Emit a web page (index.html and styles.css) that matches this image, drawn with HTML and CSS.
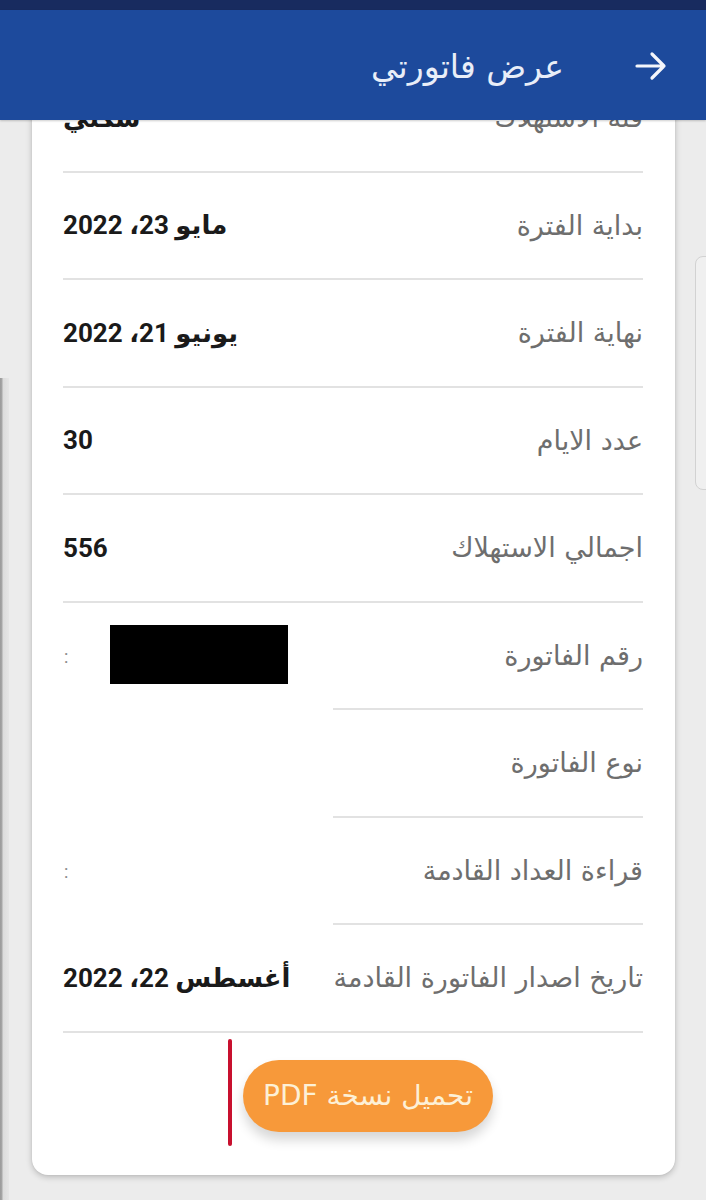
FILE: index.html
```html
<!DOCTYPE html>
<html lang="ar">
<head>
<meta charset="utf-8">
<title>عرض فاتورتي</title>
<link rel="stylesheet" href="styles.css">
</head>
<body>
<div class="screen">
  <div class="edge-left"></div>
  <div class="edge-right"></div>
  <main class="content">
    <section class="card" dir="rtl">
      <div class="row">
        <span class="label">فئة الاستهلاك</span>
        <span class="value">سكني</span>
      </div>
      <div class="row">
        <span class="label">بداية الفترة</span>
        <span class="value">مايو 23، 2022</span>
      </div>
      <div class="row">
        <span class="label">نهاية الفترة</span>
        <span class="value">يونيو 21، 2022</span>
      </div>
      <div class="row">
        <span class="label">عدد الايام</span>
        <span class="value">30</span>
      </div>
      <div class="row">
        <span class="label">اجمالي الاستهلاك</span>
        <span class="value">556</span>
      </div>
      <div class="row split">
        <span class="label">رقم الفاتورة</span>
        <span class="value masked"><span class="colon">:</span><span class="redact"></span></span>
      </div>
      <div class="row split">
        <span class="label">نوع الفاتورة</span>
        <span class="value masked"></span>
      </div>
      <div class="row split">
        <span class="label">قراءة العداد القادمة</span>
        <span class="value masked"><span class="colon">:</span></span>
      </div>
      <div class="row">
        <span class="label">تاريخ اصدار الفاتورة القادمة</span>
        <span class="value">أغسطس 22، 2022</span>
      </div>
      <div class="actions" dir="ltr">
        <span class="cursor"></span>
        <button class="pdf-btn" dir="rtl">تحميل نسخة PDF</button>
      </div>
    </section>
  </main>
  <header class="appbar">
    <div class="status"></div>
    <div class="bar" dir="rtl">
      <svg class="back" width="34" height="30" viewBox="0 0 34 30" aria-hidden="true">
        <path d="M3 15 H30 M18 3 L30 15 L18 27" fill="none" stroke="#f4f6fb" stroke-width="3.2" stroke-linecap="round" stroke-linejoin="round"/>
      </svg>
      <h1 class="title">عرض فاتورتي</h1>
    </div>
  </header>
</div>
</body>
</html>
```

FILE: styles.css
```css
* { box-sizing: border-box; }

html, body {
  margin: 0;
  padding: 0;
}

body {
  width: 706px;
  height: 1200px;
  overflow: hidden;
  background: #ececec;
  font-family: "DejaVu Sans", sans-serif;
}

.screen {
  position: relative;
  width: 706px;
  height: 1200px;
  overflow: hidden;
  background: #ececec;
}

.edge-left {
  position: absolute;
  left: 0;
  top: 378px;
  width: 9px;
  height: 822px;
  background: linear-gradient(to right, #9a9a9a 0, #a8a8a8 2px, #dcdcdc 3px, #e6e6e6 9px);
}

.edge-right {
  position: absolute;
  left: 695px;
  top: 256px;
  width: 20px;
  height: 234px;
  border: 1px solid #d2d2d2;
  border-radius: 8px;
  background: #f0f0f0;
}

.content {
  padding: 0 31px 0 32px;
}

.card {
  background: #ffffff;
  border-radius: 0 0 16px 16px;
  padding: 65px 32px 0 31px;
  height: 1175px;
  box-shadow: 0 2px 6px rgba(0, 0, 0, 0.22), 0 0 2px rgba(0, 0, 0, 0.08);
}

.row {
  display: flex;
  align-items: center;
  justify-content: space-between;
  height: 107.5px;
  border-bottom: 2px solid #e2e2e2;
}

.label {
  font-family: "DejaVu Sans", sans-serif;
  font-size: 27px;
  color: #6e6e6e;
  white-space: nowrap;
}

.value {
  font-family: Roboto, "DejaVu Sans", sans-serif;
  font-weight: bold;
  font-size: 26px;
  color: #1a1a1a;
  white-space: nowrap;
}

.row.split {
  border-bottom: none;
  align-items: stretch;
}

.row.split .label {
  width: 310px;
  display: flex;
  align-items: center;
  border-bottom: 2px solid #e2e2e2;
}

.value.masked {
  flex: 1;
  display: flex;
  direction: ltr;
  align-items: center;
}

.colon {
  font-family: Roboto, sans-serif;
  font-weight: normal;
  font-size: 18px;
  color: #8a8a8a;
  width: 4px;
  margin-left: 1px;
  margin-right: 42px;
}

.redact {
  display: block;
  width: 178px;
  height: 59px;
  background: #000000;
  margin-top: -3px;
}

.actions {
  display: flex;
  align-items: flex-start;
  height: 139px;
  padding-left: 165px;
}

.cursor {
  display: block;
  width: 4px;
  height: 107px;
  margin-top: 6px;
  background: #c8102e;
  border-radius: 2px;
}

.pdf-btn {
  margin-top: 27px;
  margin-left: 11px;
  width: 250px;
  height: 72px;
  border: none;
  border-radius: 36px;
  background: #f7993a;
  color: #fdf0d6;
  font-family: "DejaVu Sans", sans-serif;
  font-size: 28px;
  box-shadow: 0 8px 12px rgba(0, 0, 0, 0.16);
  padding: 0;
}

.appbar {
  position: absolute;
  left: 0;
  top: 0;
  width: 706px;
}

.status {
  height: 10px;
  background: #182b5f;
}

.bar {
  height: 110px;
  background: #1d4a9c;
  display: flex;
  align-items: center;
  padding-right: 38px;
  box-shadow: 0 1px 2px rgba(0, 0, 0, 0.2);
}

.back {
  display: block;
  margin-top: 2px;
}

.title {
  margin: 2px 70px 0 0;
  font-family: "DejaVu Sans", sans-serif;
  font-weight: normal;
  font-size: 33px;
  color: #e9eef8;
}
```
